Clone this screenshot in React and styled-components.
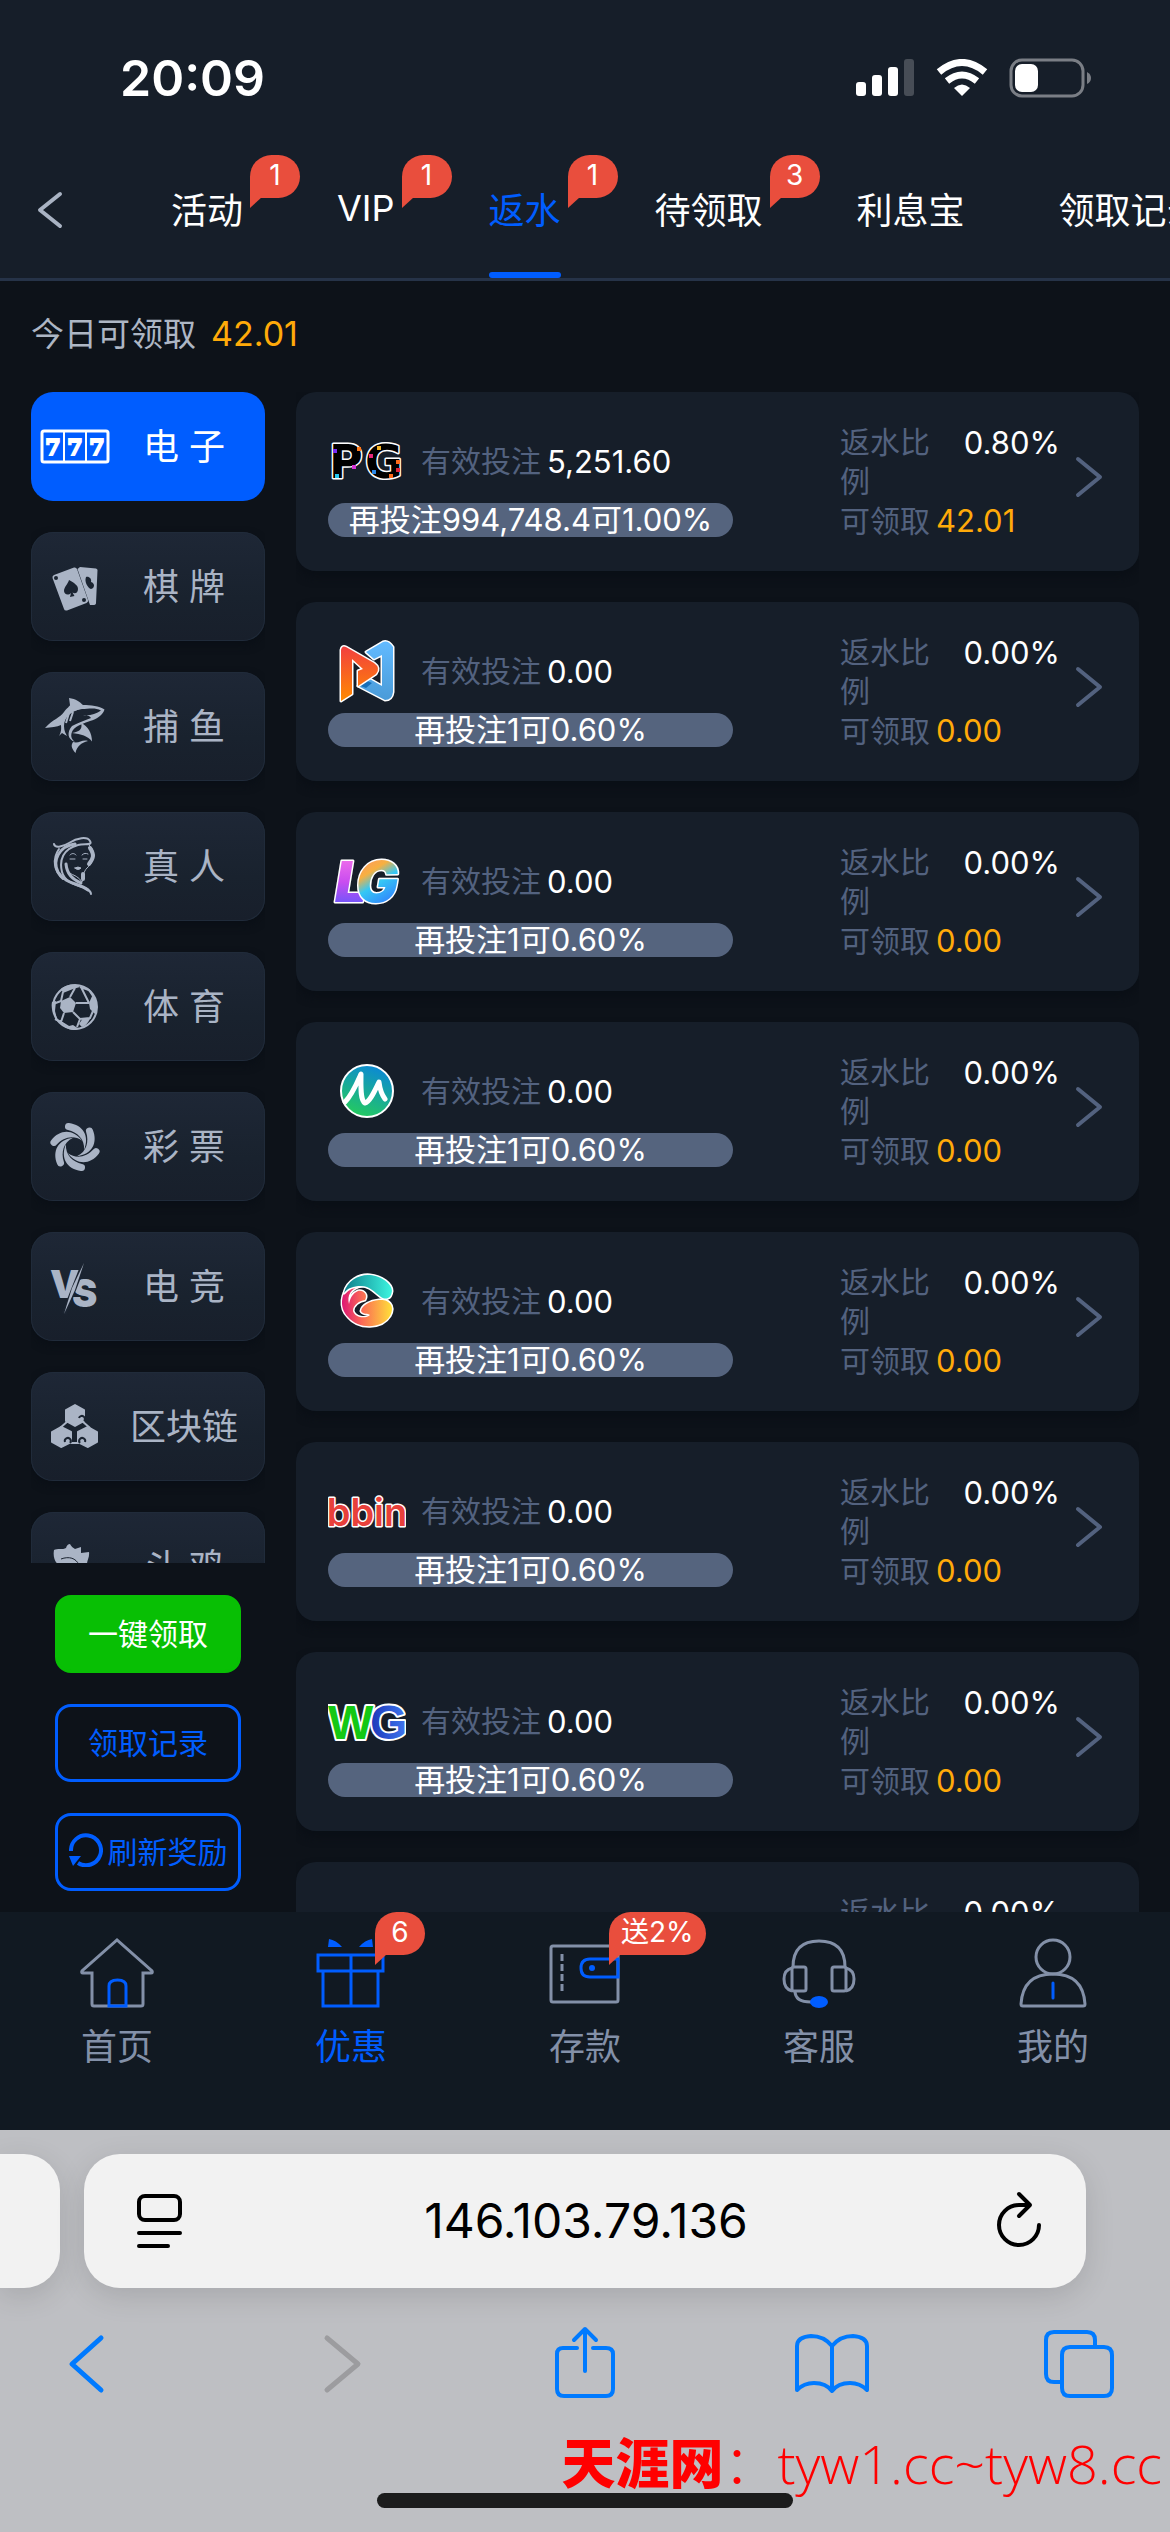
import React, { useState } from 'react';
import styled, { createGlobalStyle } from 'styled-components';

const GlobalStyle = createGlobalStyle`
  * {
    box-sizing: border-box;
  }
  body {
    margin: 0;
    background: #0d1219;
  }
  body, button, input {
    font-family: Inter, 'Noto Sans CJK SC', sans-serif;
  }
  button {
    border: 0;
    padding: 0;
    background: none;
    color: inherit;
    cursor: pointer;
  }
  svg {
    display: block;
    flex-shrink: 0;
  }
`;

const Page = styled.div`
  display: flex;
  flex-direction: column;
  height: 100vh;
  overflow: hidden;
  color: #fff;
`;

/* header */

const Header = styled.header`
  flex-shrink: 0;
  background: #161e29;
  border-bottom: 3px solid #263348;
`;

const StatusBar = styled.div`
  display: flex;
  align-items: center;
  justify-content: space-between;
  padding: 46px 78px 31px 120px;
`;

const Clock = styled.time`
  font-size: 50px;
  font-weight: 600;
  line-height: 64px;
`;

const StatusIcons = styled.div`
  display: flex;
  align-items: center;
  gap: 21px;
`;

const TabBar = styled.nav`
  display: flex;
  height: 137px;
`;

const BackButton = styled.button`
  flex-shrink: 0;
  width: 171px;
  padding-left: 36px;
`;

const TabList = styled.div`
  display: flex;
  gap: 94px;
  flex: 1;
  min-width: 0;
  overflow: hidden;
`;

const Tab = styled.button`
  position: relative;
  flex-shrink: 0;
  padding-bottom: 4px;
  font-size: 36px;
  white-space: nowrap;
  color: ${(props) => (props.$active ? '#005dff' : '#fff')};

  &::before {
    content: '';
    position: absolute;
    left: 0;
    right: 0;
    bottom: 0;
    height: 6px;
    border-radius: 3px;
    background: ${(props) => (props.$active ? '#005dff' : 'transparent')};
  }
`;

const Badge = styled.span`
  position: absolute;
  top: ${(props) => props.$top};
  left: ${(props) => props.$left};
  min-width: 50px;
  height: 43px;
  padding: 0 12px;
  border-radius: 22px 22px 22px 0;
  background: #e94e3d;
  color: #fff;
  font-size: 28px;
  line-height: 41px;
  text-align: center;
  white-space: nowrap;

  &::after {
    content: '';
    position: absolute;
    left: 0;
    top: 42px;
    border-top: 11px solid #e94e3d;
    border-right: 12px solid transparent;
  }
`;

/* main */

const Main = styled.main`
  display: flex;
  flex-direction: column;
  flex: 1;
  min-height: 0;
  padding: 0 31px;
`;

const Summary = styled.p`
  flex-shrink: 0;
  margin: 0;
  padding: 33px 0 38px;
  font-size: 33px;
  line-height: 40px;
  color: #adb6c4;
`;

const SummaryAmount = styled.span`
  margin-left: 15px;
  font-size: 34px;
  color: #ffaa09;
`;

const Columns = styled.div`
  display: grid;
  grid-template-columns: 234px minmax(0, 1fr);
  grid-template-rows: minmax(0, 1fr);
  gap: 31px;
  flex: 1;
  min-height: 0;
`;

const Side = styled.aside`
  display: flex;
  flex-direction: column;
  min-height: 0;
`;

const Rail = styled.div`
  display: flex;
  flex-direction: column;
  gap: 31px;
  flex: 1;
  min-height: 0;
  overflow: hidden;
`;

const RailButton = styled.button`
  display: flex;
  align-items: center;
  flex-shrink: 0;
  height: 109px;
  padding: 0 8px;
  border-radius: 22px;
  font-size: 36px;
  color: ${(props) => (props.$active ? '#fff' : '#aab4c5')};
  background: ${(props) =>
    props.$active ? '#005dff' : 'linear-gradient(#1e2736, #19222e 60%, #181f2b)'};
  box-shadow: ${(props) =>
    props.$active ? 'none' : 'inset 0 0 0 1px #202b3a, 0 4px 8px #0a0f16'};
`;

const RailLabel = styled.span`
  flex: 1;
  padding-bottom: 6px;
  text-align: center;
`;

const Actions = styled.div`
  display: flex;
  flex-direction: column;
  gap: 31px;
  flex-shrink: 0;
  padding: 32px 24px 21px;
`;

const ActionButton = styled.button`
  display: flex;
  align-items: center;
  justify-content: center;
  gap: 5px;
  height: 78px;
  padding-bottom: 4px;
  border: 3px solid ${(props) => (props.$filled ? '#08bf04' : '#005dff')};
  border-radius: 16px;
  background: ${(props) => (props.$filled ? '#08bf04' : 'transparent')};
  color: ${(props) => (props.$filled ? '#fff' : '#005dff')};
  font-size: 30px;
  white-space: nowrap;
`;

const CardList = styled.section`
  display: flex;
  flex-direction: column;
  gap: 31px;
  min-height: 0;
  overflow: hidden;
`;

const Card = styled.article`
  display: flex;
  justify-content: space-between;
  align-items: flex-start;
  flex-shrink: 0;
  height: 179px;
  padding: 31px 36px 0 32px;
  border-radius: 20px;
  background: #161e29;
  box-shadow: 0 6px 10px #0a0f16;
  font-size: 31px;
  line-height: 39px;
`;

const BetInfo = styled.div`
  display: flex;
  flex-direction: column;
  gap: 2px;
  width: 405px;
`;

const BetRow = styled.div`
  display: flex;
  align-items: center;
  height: 78px;
  padding-bottom: 2px;
`;

const Label = styled.span`
  font-size: 30px;
  color: #53627f;
`;

const BetLabel = styled(Label)`
  margin-left: 15px;
`;

const RatioLabel = styled(Label)`
  max-width: 110px;
`;

const Amount = styled.span`
  margin-left: 6px;
  color: ${(props) => (props.$gold ? '#ffaa09' : '#fff')};
`;

const NextLevel = styled.div`
  height: 34px;
  border-radius: 17px;
  background: #55647e;
  line-height: 33px;
  text-align: center;
  white-space: nowrap;
`;

const RebateInfo = styled.div`
  display: flex;
  align-items: center;
  gap: 15px;
`;

const Rebate = styled.div`
  width: 220px;
`;

const RatioRow = styled.div`
  display: flex;
  justify-content: space-between;
`;

const DetailButton = styled.button`
  padding-bottom: 10px;
`;

/* bottom navigation */

const BottomNav = styled.nav`
  display: grid;
  grid-template-columns: repeat(5, 1fr);
  flex-shrink: 0;
  background: #111922;
`;

const NavLink = styled.a`
  position: relative;
  display: flex;
  flex-direction: column;
  align-items: center;
  gap: 15px;
  padding: 23px 0 62px;
  font-size: 36px;
  line-height: 42px;
  text-decoration: none;
  color: ${(props) => (props.$active ? '#005dff' : '#8390a8')};
`;

/* browser chrome */

const Browser = styled.footer`
  display: flex;
  flex-direction: column;
  flex-shrink: 0;
  padding: 24px 0;
  background: #bebfc3;
`;

const AddressRow = styled.div`
  display: flex;
  gap: 24px;
  padding-right: 84px;
`;

const NextPage = styled.div`
  width: 60px;
  border-radius: 0 36px 36px 0;
  background: #f2f2f2;
  box-shadow: 0 8px 30px rgba(0, 0, 0, 0.12);
`;

const AddressBar = styled.div`
  display: flex;
  align-items: center;
  flex: 1;
  min-width: 0;
  height: 134px;
  padding: 0 42px 0 50px;
  border-radius: 36px;
  background: #f2f2f2;
  box-shadow: 0 8px 30px rgba(0, 0, 0, 0.12);
`;

const AddressInput = styled.input`
  flex: 1;
  min-width: 0;
  border: 0;
  padding: 0 6px 0 0;
  background: none;
  color: #000;
  font-size: 48px;
  line-height: 60px;
  text-align: center;
`;

const Toolbar = styled.div`
  display: flex;
  justify-content: space-between;
  padding: 37px 52px 0 48px;
`;

const SiteNote = styled.p`
  display: flex;
  justify-content: flex-end;
  margin: 34px 8px 0;
  color: #f00;
  font-family: 'Open Sans', 'Noto Sans CJK SC', sans-serif;
  font-size: 54px;
  font-weight: 300;
  line-height: 56px;
`;

const SiteName = styled.strong`
  font-weight: 900;
`;

const HomeIndicator = styled.div`
  align-self: center;
  width: 416px;
  height: 15px;
  margin-top: 2px;
  border-radius: 8px;
  background: #1c1c1c;
`;

const BLUE = '#005dff';

/* category icons, all on a 72x60 canvas */

const categoryIcons = {
  slots: (
    <>
      <rect x="3" y="14" width="66" height="31" rx="2" fill="none" stroke="currentColor" strokeWidth="3" />
      <path d="M25 15V45M47 15V45" stroke="currentColor" strokeWidth="2" />
      <g fontFamily="DejaVu Serif" fontWeight="700" fontSize="22" textAnchor="middle" stroke="currentColor" strokeWidth="2">
        <text x="14" y="38">7</text>
        <text x="36" y="38">7</text>
        <text x="58" y="38">7</text>
      </g>
    </>
  ),
  cards: (
    <>
      <path d="M41 10L57 11.500Q58.500 12 58.500 13L57 46Q57 48 54 48H51L38.500 12Z" />
      <path d="M47 20C50 19 53 22 52 25C56 26 56 31 52 32C49 31 45 25 47 20Z" fill="#1b2431" />
      <path d="M15 18L35 10.500Q37 10 38 12L49 43Q49.500 45 47.500 46L28 53.500Q25.500 54 25 52L13.500 21Q13 19 15 18Z" />
      <path d="M30 23C35 26 39 28 39 32C39 36 36 37 33.500 35.500L35.500 39L31 40L32 36C29 39 25 37 25 34C25 30 29 27 30 23Z" fill="#1b2431" />
      <circle cx="17" cy="21" r="2" fill="#1b2431" />
      <circle cx="45" cy="43" r="2" fill="#1b2431" />
    </>
  ),
  fishing: (
    <>
      <path d="M6 31C14 22 21 21 25 15C28 11 31 9 31 8L30 1C37 2 41 5 44 8C52 8 60 9 65.500 12.500C64 18 58 22 51 24C46 26 38 28 34 33C31 38 32 42 36 45C28 42 28 35 33 29C38 26 45 24 52 21C50 18 47 18 44 18C50 19 57 17 62 13.500C56 10 49 12 43 12C33 13 25 20 25 29C25 34 27 37 28 39L23 36L20 39C23 34 22 30 22 28C18 30 12 30 6 31Z" />
      <path d="M31 10C36 8 46 8 52 10C42 11 32 14 28 20C27 16 29 12 31 10Z" />
      <path d="M30 16L27 26M34 15L31 24" stroke="currentColor" strokeWidth="2" />
      <path d="M42 26C49 29 53 36 53 44.500C49 39 42 37 33 36C40 35 44 32 42 26Z" />
      <path d="M34 45C40 47 43 42 49 44C42 46 38 49 36.500 56C32 51 32 48 34 45Z" />
    </>
  ),
  live: (
    <g fill="none" stroke="currentColor" strokeLinecap="round">
      <path d="M15 7C16 12 25 9 30 6C38 1 48 -1 51 4C54 9 45 6 39 8C24 12 20 23 23 35C26 46 38 48 46 51Q52 54 52 57" strokeWidth="2" />
      <path d="M36 7C20 9 13 24 19 35C26 47 40 46 49 53" strokeWidth="3" />
      <path d="M20 12C13 22 15 34 24 42" strokeWidth="2" />
      <path d="M50 8C58 15 55 25 48 31C44 35 45 39 43 45C40 40 35 38 30 36" strokeWidth="1" />
      <path d="M51 11C56 18 54 22 50 27M44 37V42" strokeWidth="4" />
      <path d="M27 27C28 37 33 42 42 46" strokeWidth="3" />
      <path d="M31 18C33 16 35 16 37 18M43 18C45 16 47 16 49 17M31 22H36M44 22H48" strokeWidth="1" />
      <path d="M36 31Q39 29 42 31Q39 34 36 31Z" fill="currentColor" />
    </g>
  ),
  sports: (
    <>
      <circle cx="36" cy="30" r="22" fill="none" stroke="currentColor" strokeWidth="2" />
      <path d="M22 24L31 20L37 26L34 35L25 36L21 31Z" />
      <path d="M22 12C28 7 37 6 41 10L34 12L24 16ZM54 17C58 24 59 30 57 38L51 32L50 26ZM13 25L17 24L16 34L18 42C13 36 12 30 13 25ZM26 50L34 48L40 52C35 54 30 53 26 50ZM44 41L51 42C49 46 46 49 43 50L40 47Z" />
      <path d="M24 15L22 24M31 20L36 11M41 10L50 13L54 19M37 26L50 26M34 35L41 42L51 41L54 34M41 42L38 50M25 36L22 45L30 50M22 24L14 27M22 45L16 42M50 26L47 20L42 10" fill="none" stroke="currentColor" strokeWidth="2" />
    </>
  ),
  lottery: (
    <g transform="translate(36 30)">
      {[0, 60, 120, 180, 240, 300].map((angle) => (
        <path
          key={angle}
          transform={`rotate(${angle})`}
          d="M-6 -24C8 -22 15 -11 9 3C10 -8 2 -15 -7 -17A3.500 3.500 0 0 1 -6 -24Z"
        />
      ))}
    </g>
  ),
  esports: (
    <>
      <g fontFamily="Inter" fontWeight="900" fontSize="38">
        <text x="11" y="41">V</text>
        <text x="33" y="50">S</text>
      </g>
      <path d="M45 6L25 57" stroke="#1b2431" strokeWidth="5" />
      <path d="M45 6L36 33L25 57L33 31Z" />
    </>
  ),
  blockchain: (
    <>
      <path d="M36 8L45 13V24L36 29L27 24V13ZM22 30L32 35V45L22 50L13 45V35ZM49 30L58 35V45L49 50L39 45V35Z" stroke="currentColor" strokeWidth="2" strokeLinejoin="round" />
      <path d="M29 24L21 31M43 24L51 31M31 46H41" fill="none" stroke="currentColor" strokeWidth="2" />
      <g fill="none" stroke="#1b2431" strokeWidth="2">
        <path d="M45 24A3 3 0 1 0 40 21M26 45A3 3 0 1 1 31 46M46 45A3 3 0 1 0 41 46" />
      </g>
    </>
  ),
  cockfight: (
    <>
      <path d="M15 13C18 11 24 13 27 11C28 8 29 7 31 7C32 9 34 11 36 12L42 10L42 16L50 15C51 22 46 25 49 30L43 48H24L27 32C20 30 13 24 15 13Z" />
      <path d="M22 22C30 19 37 21 40 28" fill="none" stroke="#1b2431" strokeWidth="1" />
    </>
  ),
};

/* provider logos, all on a 78x78 canvas */

const outline = {
  stroke: '#fff',
  strokeWidth: 3,
  paintOrder: 'stroke',
  strokeLinejoin: 'round',
};

const logos = {
  pg: (
    <>
      <g fontFamily="DejaVu Sans" fontWeight="700" fontSize="46" {...outline}>
        <text x="1" y="56">P</text>
        <text x="37" y="56">G</text>
      </g>
      <path d="M5 27h4v4h-4z" fill="#7a2cf5" />
      <path d="M29 25h4v4h-4z" fill="#ff7a1a" />
      <path d="M24 43h4v4h-4z" fill="#d633d6" />
      <path d="M7 52h4v4h-4z" fill="#25c8f0" />
      <path d="M41 32h4v4h-4z" fill="#e8267c" />
      <path d="M49 24h4v4h-4z" fill="#f5b324" />
      <path d="M68 38h4v4h-4z" fill="#ff6a1a" />
      <path d="M68 46h4v4h-4z" fill="#e3243b" />
      <path d="M44 48h4v4h-4z" fill="#2b87e8" />
      <path d="M61 52h4v4h-4z" fill="#ff6a1a" />
    </>
  ),
  ng: (
    <>
      <linearGradient id="ngWarm" x2="0" y2="1">
        <stop stopColor="#f23f3f" />
        <stop offset="1" stopColor="#ff8a00" />
      </linearGradient>
      <linearGradient id="ngCool" x2="0" y2="1">
        <stop stopColor="#62baff" />
        <stop offset="1" stopColor="#4a9bd8" />
      </linearGradient>
      <path d="M38 20L55 10Q60 8 65 15V60Q64 68 57 68L30 54L40 46L54 54V23L46 27Z" fill="url(#ngCool)" {...outline} />
      <path d="M30 53L37 48L44 51L38 56Z" fill="#176fb8" />
      <path d="M13 18Q14 13 18 15L46 31Q53 36 48 42L30 54V39L35 37L24 27V62L13 69Z" fill="url(#ngWarm)" {...outline} />
    </>
  ),
  lg: (
    <>
      <linearGradient id="lgLeft" x2="0" y2="1">
        <stop stopColor="#ff7ee8" />
        <stop offset="0.500" stopColor="#c94cf0" />
        <stop offset="1" stopColor="#3f5bff" />
      </linearGradient>
      <linearGradient id="lgRight" x1="0.200" x2="0.600" y2="1">
        <stop stopColor="#ff8a7a" />
        <stop offset="0.350" stopColor="#f7b040" />
        <stop offset="0.550" stopColor="#35c8f5" />
        <stop offset="1" stopColor="#2f6dff" />
      </linearGradient>
      <g fontFamily="Inter" fontWeight="900" fontStyle="italic" fontSize="56" {...outline}>
        <text x="7" y="60" fill="url(#lgLeft)">L</text>
        <text x="28" y="60" fill="url(#lgRight)">G</text>
      </g>
    </>
  ),
  mg: (
    <>
      <linearGradient id="mgFill" x1="0.700" x2="0.300" y2="1">
        <stop stopColor="#0b87d8" />
        <stop offset="1" stopColor="#25cc5c" />
      </linearGradient>
      <circle cx="39" cy="39" r="26" fill="url(#mgFill)" stroke="#fff" strokeWidth="2" />
      <path d="M17 50C24 43 29 31 33 22C33 34 32 48 37 51C42 50 47 38 51 30C52 38 54 43 57 47" fill="none" stroke="#fff" strokeWidth="5" strokeLinecap="round" strokeLinejoin="round" />
    </>
  ),
  gg: (
    <>
      <linearGradient id="ggTop">
        <stop stopColor="#0d7f8c" />
        <stop offset="1" stopColor="#3df5e0" />
      </linearGradient>
      <linearGradient id="ggBottom">
        <stop stopColor="#dd1674" />
        <stop offset="0.400" stopColor="#fb6a55" />
        <stop offset="1" stopColor="#ffe13a" />
      </linearGradient>
      <path d="M24 22C12 30 11 46 20 55C31 68 54 67 62 54C68 43 60 37 51 38C42 39 34 43 33 49C35 53 40 51 42 53C38 57 27 56 25 49C25 43 31 39 37 38C40 33 36 28 30 29C25 31 22 36 21 42C19 34 22 26 34 24Z" fill="url(#ggBottom)" {...outline} />
      <path d="M16 31C19 18 32 12 42 13C54 14 64 22 64 29C63 37 58 38 53 35C46 30 42 24 33 24C25 24 20 26 16 31Z" fill="url(#ggTop)" {...outline} />
    </>
  ),
  bbin: (
    <text x="39" y="54" textAnchor="middle" fontFamily="Inter" fontWeight="600" fontSize="38" fill="#e8403a" {...outline}>
      bbin
    </text>
  ),
  wg: (
    <>
      <linearGradient id="wgBlue">
        <stop stopColor="#1a36b8" />
        <stop offset="1" stopColor="#4078f0" />
      </linearGradient>
      <g fontFamily="Liberation Sans" fontWeight="700" fontSize="48" {...outline} strokeWidth="4">
        <text x="42" y="57" fill="url(#wgBlue)">G</text>
        <text x="0" y="57" fill="#14c814">W</text>
      </g>
    </>
  ),
};

/* bottom navigation icons, 76x76 */

const navIcons = {
  home: (
    <>
      <path d="M13 38H4Q2 38 3 36L38 5L73 36Q74 38 72 38H64V69Q64 71 62 71H15Q13 71 13 69Z" />
      <path d="M30 71V51Q30 45 38.500 45Q47 45 47 51V71Z" stroke={BLUE} />
    </>
  ),
  promo: (
    <g stroke={BLUE}>
      <path d="M5 20H70V36H5ZM10 36V71H65V36M38 20V71" />
      <path d="M16 4Q23 5 29 12H15ZM59 4Q52 5 46 12H60Z" fill={BLUE} stroke="none" />
    </g>
  ),
  deposit: (
    <>
      <rect x="4" y="11" width="67" height="56" rx="2" />
      <path d="M15 19V56" strokeDasharray="7 3" />
      <path d="M71 24H43Q34 24 34 33Q34 42 43 42H71Z" stroke={BLUE} />
      <circle cx="45" cy="33" r="3" fill={BLUE} stroke="none" />
    </>
  ),
  support: (
    <>
      <path d="M12 32Q12 6 38 6Q64 6 64 32" />
      <rect x="11" y="32" width="14" height="24" rx="2" />
      <rect x="51" y="32" width="14" height="24" rx="2" />
      <path d="M11 33Q3 35 3 44Q3 54 11 56M65 33Q73 35 73 44Q73 54 65 56M14 56Q14 67 30 67" />
      <ellipse cx="38" cy="67" rx="9" ry="6" fill={BLUE} stroke="none" />
    </>
  ),
  mine: (
    <>
      <circle cx="38" cy="22" r="17" />
      <path d="M6 69Q8 39 38 39Q68 39 70 69Q70 71 68 71H8Q6 71 6 69Z" />
      <path d="M38 48V63" stroke={BLUE} strokeLinecap="round" />
    </>
  ),
};

const toolbarItems = [
  { label: '后退', d: 'M53 13L24 39L53 65', width: 5 },
  { label: '前进', d: 'M30 13L61 39L30 65', width: 5, color: '#9c9c9f' },
  { label: '分享', d: 'M32 23H18Q12 23 12 29V64Q12 71 19 71H61Q68 71 68 64V29Q68 23 61 23H48M40 46V4M29 15L40 4L51 15' },
  { label: '书签', d: 'M38 21Q30 11 17 11Q3 12 3 21V65Q10 58 20 58Q32 58 38 66Q44 58 56 58Q66 58 73 65V21Q73 12 59 11Q46 11 38 21V66' },
  { label: '标签页', d: 'M53 20V15Q53 7 45 7H12Q4 7 4 15V49Q4 57 12 57H19M28 22H62Q70 22 70 30V63Q70 71 62 71H28Q20 71 20 63V30Q20 22 28 22Z' },
];

const tabs = [
  { name: '活动', count: 1 },
  { name: 'VIP', count: 1 },
  { name: '返水', count: 1 },
  { name: '待领取', count: 3 },
  { name: '利息宝' },
  { name: '领取记录' },
];

const categories = [
  { id: 'slots', name: '电 子' },
  { id: 'cards', name: '棋 牌' },
  { id: 'fishing', name: '捕 鱼' },
  { id: 'live', name: '真 人' },
  { id: 'sports', name: '体 育' },
  { id: 'lottery', name: '彩 票' },
  { id: 'esports', name: '电 竞' },
  { id: 'blockchain', name: '区块链' },
  { id: 'cockfight', name: '斗 鸡' },
];

const providers = [
  { id: 'pg', bet: '5,251.60', ratio: '0.80%', amount: '42.01', next: '再投注994,748.4可1.00%' },
  ...['ng', 'lg', 'mg', 'gg', 'bbin', 'wg', 'other'].map((id) => ({
    id,
    bet: '0.00',
    ratio: '0.00%',
    amount: '0.00',
    next: '再投注1可0.60%',
  })),
];

const navItems = [
  { id: 'home', name: '首页' },
  { id: 'promo', name: '优惠', badge: '6' },
  { id: 'deposit', name: '存款', badge: '送2%' },
  { id: 'support', name: '客服' },
  { id: 'mine', name: '我的' },
];

function StatusGlyphs() {
  return (
    <StatusIcons>
      <svg width="59" height="38" viewBox="0 0 59 38" fill="#fff">
        <rect y="23" width="10" height="14" rx="3" />
        <rect x="16" y="16" width="10" height="21" rx="3" />
        <rect x="32" y="8" width="10" height="29" rx="3" />
        <rect x="48" width="10" height="37" rx="3" fill="#474d56" />
      </svg>
      <svg width="52" height="38" viewBox="0 0 52 38" fill="none" stroke="#fff" strokeWidth="7">
        <path d="M3 13Q26 -6 49 13" />
        <path d="M11 22Q26 10 41 22" />
        <path d="M26 37L18 29Q26 22 34 29Z" fill="#fff" stroke="none" />
      </svg>
      <svg width="83" height="40" viewBox="0 0 83 40">
        <rect x="2" y="2" width="72" height="36" rx="11" fill="none" stroke="#7a7e85" strokeWidth="3" />
        <rect x="6" y="6" width="23" height="28" rx="7" fill="#fff" />
        <path d="M78 14Q82 16 82 20Q82 24 78 26Z" fill="#7a7e85" />
      </svg>
    </StatusIcons>
  );
}

function ProviderCard({ provider }) {
  return (
    <Card>
      <BetInfo>
        <BetRow>
          <svg width="78" height="78" viewBox="0 0 78 78">
            {logos[provider.id]}
          </svg>
          <BetLabel>有效投注</BetLabel>
          <Amount>{provider.bet}</Amount>
        </BetRow>
        <NextLevel>{provider.next}</NextLevel>
      </BetInfo>
      <RebateInfo>
        <Rebate>
          <RatioRow>
            <RatioLabel>返水比例</RatioLabel>
            <span>{provider.ratio}</span>
          </RatioRow>
          <Label>可领取</Label>
          <Amount $gold>{provider.amount}</Amount>
        </Rebate>
        <DetailButton aria-label='查看详情'>
          <svg width="28" height="42" viewBox="0 0 28 42">
            <path d="M3 3L25 21L3 39" fill="none" stroke="#53627f" strokeWidth="4" strokeLinecap="round" strokeLinejoin="round" />
          </svg>
        </DetailButton>
      </RebateInfo>
    </Card>
  );
}

function App() {
  const [activeTab, setActiveTab] = useState('返水');
  const [category, setCategory] = useState('slots');

  return (
    <Page>
      <GlobalStyle />
      <Header>
        <StatusBar>
          <Clock>20:09</Clock>
          <StatusGlyphs />
        </StatusBar>
        <TabBar>
          <BackButton aria-label='返回'>
            <svg width="28" height="40" viewBox="0 0 28 40">
              <path d="M24 4L4 20L24 36" fill="none" stroke="#a9b3c3" strokeWidth="4" strokeLinecap="round" strokeLinejoin="round" />
            </svg>
          </BackButton>
          <TabList>
            {tabs.map((tab) => (
              <Tab
                key={tab.name}
                $active={tab.name === activeTab}
                onClick={() => setActiveTab(tab.name)}
              >
                {tab.name}
                {tab.count && (
                  <Badge $top='14px' $left='calc(100% + 7px)'>
                    {tab.count}
                  </Badge>
                )}
              </Tab>
            ))}
          </TabList>
        </TabBar>
      </Header>

      <Main>
        <Summary>
          今日可领取
          <SummaryAmount>42.01</SummaryAmount>
        </Summary>
        <Columns>
          <Side>
            <Rail>
              {categories.map((item) => (
                <RailButton
                  key={item.id}
                  $active={item.id === category}
                  onClick={() => setCategory(item.id)}
                >
                  <svg width="72" height="60" viewBox="0 0 72 60" fill="currentColor">
                    {categoryIcons[item.id]}
                  </svg>
                  <RailLabel>{item.name}</RailLabel>
                </RailButton>
              ))}
            </Rail>
            <Actions>
              <ActionButton $filled>一键领取</ActionButton>
              <ActionButton>领取记录</ActionButton>
              <ActionButton>
                <svg width="34" height="34" viewBox="0 0 34 34">
                  <path d="M2 18A15 15 0 1 1 9 30" fill="none" stroke="currentColor" strokeWidth="4" />
                  <path d="M0 23H12L4 33Z" fill="currentColor" />
                </svg>
                刷新奖励
              </ActionButton>
            </Actions>
          </Side>
          <CardList>
            {providers.map((provider) => (
              <ProviderCard key={provider.id} provider={provider} />
            ))}
          </CardList>
        </Columns>
      </Main>

      <BottomNav>
        {navItems.map((item) => (
          <NavLink key={item.id} href={`#${item.id}`} $active={item.id === 'promo'}>
            <svg width="76" height="76" viewBox="0 0 76 76" fill="none" stroke="#8390a8" strokeWidth="3">
              {navIcons[item.id]}
            </svg>
            {item.name}
            {item.badge && (
              <Badge $top='0' $left='calc(50% + 24px)'>
                {item.badge}
              </Badge>
            )}
          </NavLink>
        ))}
      </BottomNav>

      <Browser>
        <AddressRow>
          <NextPage />
          <AddressBar>
            <svg width="50" height="58" viewBox="0 0 50 58" fill="none" stroke="#000" strokeWidth="4" strokeLinecap="round">
              <rect x="5" y="4" width="41" height="24" rx="6" />
              <path d="M5 41H46M5 54H34" />
            </svg>
            <AddressInput aria-label='地址' defaultValue='146.103.79.136' />
            <button aria-label='刷新'>
              <svg width="50" height="60" viewBox="0 0 50 60" fill="none" stroke="#000" strokeWidth="4" strokeLinecap="round" strokeLinejoin="round">
                <path d="M45 34A20 20 0 1 1 25 14H34" />
                <path d="M25 3L36 14L25 25" />
              </svg>
            </button>
          </AddressBar>
        </AddressRow>
        <Toolbar>
          {toolbarItems.map((item) => (
            <button key={item.label} aria-label={item.label}>
              <svg width="76" height="76" viewBox="0 0 76 76" fill="none" stroke={item.color || '#007aff'} strokeWidth={item.width || 4} strokeLinecap="round" strokeLinejoin="round">
                <path d={item.d} />
              </svg>
            </button>
          ))}
        </Toolbar>
        <SiteNote>
          <SiteName>天涯网</SiteName>：tyw1.cc~tyw8.cc
        </SiteNote>
        <HomeIndicator />
      </Browser>
    </Page>
  );
}

export default App;
